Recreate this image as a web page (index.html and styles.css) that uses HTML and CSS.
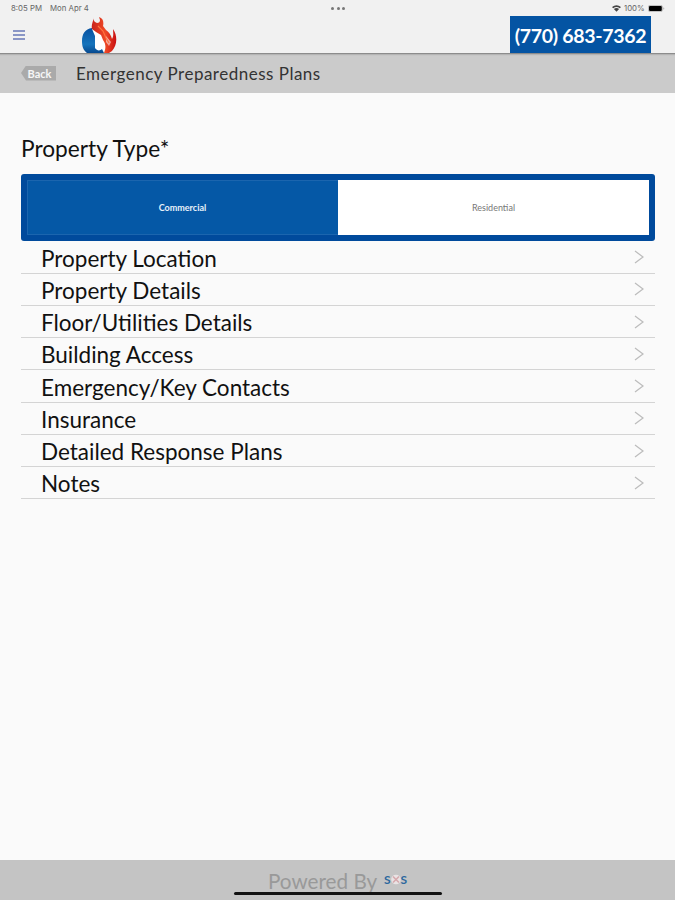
FILE: index.html
```html
<!DOCTYPE html>
<html lang="en">
<head>
<meta charset="utf-8">
<title>Emergency Preparedness Plans</title>
<link rel="stylesheet" href="styles.css">
</head>
<body>
<header class="top">
  <div class="status">
    <span class="clock">8:05 PM</span><span class="date">Mon Apr 4</span>
    <span class="dots"><i></i><i></i><i></i></span>
    <svg class="wifi" viewBox="0 0 9 7"><path d="M0 2Q4.500-1.500 9 2L7.800 3.300Q4.500.8 1.200 3.300ZM1.900 4Q4.500 2 7.100 4L4.500 6.800Z"/></svg>
    <span class="percent">100%</span>
    <svg class="battery" viewBox="0 0 17 7"><rect x=".4" y=".4" width="14" height="6.200" rx="1.500" fill="none" stroke="#888" stroke-width=".5"/><rect x="1" y="1" width="12.800" height="5" rx="1"/><path d="M15.300 2.500v2q1-.2 1-1t-1-1" fill="#aaa"/></svg>
  </div>
  <div class="brand">
    <svg class="menu" viewBox="0 0 12 10"><path d="M0 1h12M0 5h12M0 9h12"/></svg>
    <svg class="logo" viewBox="0 0 36 37">
      <defs>
        <linearGradient id="blue" x2="0" y2="1"><stop stop-color="#0751a0"/><stop offset=".65" stop-color="#1674bc"/><stop offset="1" stop-color="#07498f"/></linearGradient>
        <linearGradient id="fire"><stop stop-color="#c9221b"/><stop offset=".55" stop-color="#ef4a26"/><stop offset="1" stop-color="#c80f12"/></linearGradient>
      </defs>
      <path fill="url(#blue)" d="M11 12C4 13 1 18 1 25c0 5 1 9 5 12h17V22L12 14Z"/>
      <path fill="#fff" d="M11 13l11 3 4 21h-3l-2-4c-2 2-5 2-7-1V20Z"/>
      <path fill="url(#fire)" d="M13 1c-1 3 0 5 3 6 2 0 3-1 3-3l-1-3c4 1 5 5 4 9l3 4c3 2 5 5 6 9 2-3 1-7 1-10 5 7 4 17-1 22l-3 2h-5c2-5 2-9-1-13l-2-5-5-3-4-3c-1-4 1-7 2-12Z"/>
      <path fill="#fff" d="M25 20l5 6-2 4-3-4Z" opacity=".55"/>
      <path d="M17 10l5 5 3 7 3 5" fill="none" stroke="#ff7440" stroke-width="1.200"/>
    </svg>
    <a class="phone">(770) 683-7362</a>
  </div>
</header>
<nav class="bar">
  <a class="back">Back</a>
  <h1>Emergency Preparedness Plans</h1>
</nav>
<main>
  <h2>Property Type*</h2>
  <div class="toggle"><div class="option on">Commercial</div><div class="option">Residential</div></div>
  <ul>
    <li><span>Property Location</span><svg viewBox="0 0 10 14"><path d="M1 1l8 6-8 6"/></svg></li>
    <li><span>Property Details</span><svg viewBox="0 0 10 14"><path d="M1 1l8 6-8 6"/></svg></li>
    <li><span>Floor/Utilities Details</span><svg viewBox="0 0 10 14"><path d="M1 1l8 6-8 6"/></svg></li>
    <li><span>Building Access</span><svg viewBox="0 0 10 14"><path d="M1 1l8 6-8 6"/></svg></li>
    <li><span>Emergency/Key Contacts</span><svg viewBox="0 0 10 14"><path d="M1 1l8 6-8 6"/></svg></li>
    <li><span>Insurance</span><svg viewBox="0 0 10 14"><path d="M1 1l8 6-8 6"/></svg></li>
    <li><span>Detailed Response Plans</span><svg viewBox="0 0 10 14"><path d="M1 1l8 6-8 6"/></svg></li>
    <li><span>Notes</span><svg viewBox="0 0 10 14"><path d="M1 1l8 6-8 6"/></svg></li>
  </ul>
</main>
<footer>
  <span class="powered">Powered By</span>
  <span class="sos"><b>S</b><svg viewBox="0 0 10 11"><circle cx="5" cy="5.500" r="4.800" fill="#e9e3e4"/><path d="M2 2.500l6 6M8 2.500l-6 6" stroke="#d5a9ad" stroke-width="1.600"/></svg><b>S</b></span>
  <div class="home"></div>
</footer>
</body>
</html>
```
FILE: styles.css
```css
* { box-sizing: border-box; }
body { margin: 0; height: 900px; display: flex; flex-direction: column; background: #fafafa; color: #111; font-family: Lato, "Liberation Sans", sans-serif; overflow: hidden; }
.top { height: 53px; background: #f1f1f1; }
.status { height: 16px; display: flex; align-items: center; padding: 0 10px 0 11px; font: 7.800px Inter, sans-serif; color: #666; white-space: nowrap; }
.clock { width: 39px; }
.date { width: 281px; }
.dots { display: flex; gap: 2.500px; flex: 1; }
.dots i { width: 3px; height: 3px; border-radius: 50%; background: #777; }
.wifi { width: 9px; height: 7px; margin-right: 3px; fill: #444; }
.percent { width: 24px; }
.battery { width: 17px; height: 7px; }
.brand { height: 37px; display: flex; padding: 0 24px 0 13px; }
.menu { width: 12px; height: 10px; margin-top: 14px; stroke: #6878b8; stroke-width: 1.300; }
.logo { width: 36px; height: 37px; margin-left: 56px; }
.phone { width: 141px; height: 37px; margin-left: auto; background: #0454a3; color: #fff; font-size: 19.500px; font-weight: 700; letter-spacing: -.3px; line-height: 39px; text-align: center; white-space: nowrap; }
.bar { height: 40px; display: flex; align-items: center; padding-left: 21px; background: #cbcbcb; box-shadow: inset 0 3px 2px -2px #777; }
.back { width: 35px; height: 15px; padding-left: 2px; background: #aaa; color: #f6f6f6; clip-path: polygon(0 50%, 5px 0, 100% 0, 100% 100%, 5px 100%); font-size: 11px; font-weight: 700; line-height: 15px; text-align: center; }
h1 { margin: 2px 0 0 20px; font-size: 17px; font-weight: 400; letter-spacing: .5px; line-height: 24px; color: #333; white-space: nowrap; }
main { flex: 1; padding: 41px 20px 0 21px; }
h2 { margin: 0 0 10px; font-size: 22.700px; font-weight: 400; line-height: 30px; }
.toggle { height: 67px; display: flex; padding: 6px; border-radius: 3px; background: #004a9c; }
.option { flex: 1; display: flex; align-items: center; justify-content: center; background: #fff; color: #777; font-size: 9px; }
.on { background: #0558a6; color: #e8f1fa; font-weight: 700; box-shadow: inset 1px 0 #1b65ae, inset 0 1px #1b65ae, inset 0 -1px #1b65ae; }
ul { margin: 0; padding: .4px 0 0; list-style: none; }
li { height: 32.250px; display: flex; align-items: center; justify-content: space-between; padding: 3px 11px 0 20px; border-bottom: 1px solid #d4d4d4; font-size: 22.500px; line-height: 28px; white-space: nowrap; }
li svg { width: 10px; height: 14px; margin-top: -3px; fill: none; stroke: #bcbcbc; stroke-width: 1.200; }
footer { position: relative; height: 40px; display: flex; padding-left: 268px; background: #c4c4c4; color: #999; }
.powered { width: 116px; font-size: 20.700px; line-height: 42px; white-space: nowrap; }
.sos { display: flex; align-items: center; height: 39px; color: #2d689e; font-size: 12px; line-height: 12px; }
.sos svg { width: 10px; height: 11px; }
.home { position: absolute; left: 234px; bottom: 5px; width: 208px; height: 3px; border-radius: 2px; background: #111; }
```
